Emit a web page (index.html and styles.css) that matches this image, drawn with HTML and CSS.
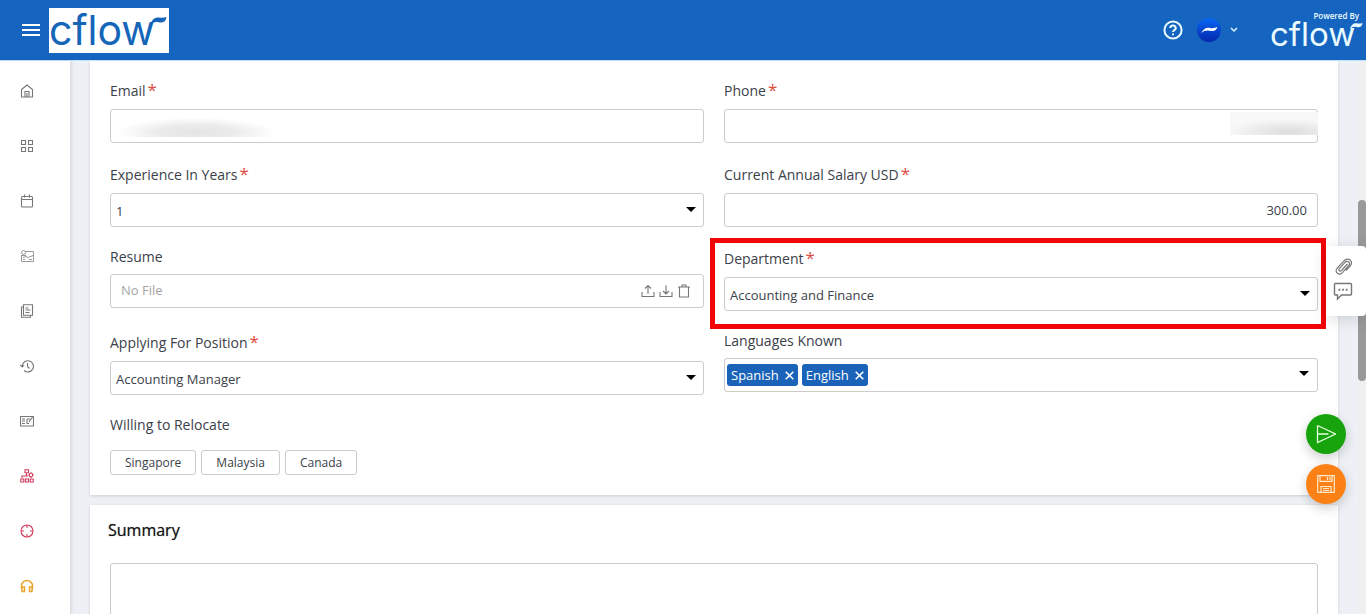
FILE: index.html
```html
<!DOCTYPE html>
<html lang="en">
<head>
<meta charset="utf-8">
<meta name="viewport" content="width=device-width, initial-scale=1">
<title>Cflow</title>
<link rel="stylesheet" href="styles.css">
</head>
<body>
<header class="topbar">
  <button class="menu-btn" type="button" aria-label="Menu"><svg width="18" height="14" viewBox="0 0 18 14" stroke="#fff" stroke-width="2"><path d="M0 2h18M0 7h18M0 12h18"/></svg></button>
  <a class="brand" href="#"><span class="word">cflow</span><svg class="swoosh" width="18" height="10" viewBox="0 0 18 10" fill="#1565b8"><path d="M1 9.500C3 3 6 1 10 1.500c3 .6 5 .3 7.500-.5-.5 4-3 6-7 5.500C6.500 5.500 4 6 1 9.500z"/></svg></a>
  <div class="top-right">
    <button class="plain" type="button" aria-label="Help"><svg width="20" height="20" viewBox="0 0 20 20" fill="none" stroke="#e9fbff" stroke-width="2"><circle cx="10" cy="10" r="8.6"/><path d="M7.3 8a2.7 2.5 0 1 1 4 2.1c-.9.5-1.3.9-1.3 1.9M10 13.6v1.6"/></svg></button>
    <button class="plain account" type="button" aria-label="Account"><svg width="24" height="24" viewBox="0 0 24 24"><defs><linearGradient id="av" x1="0" y1="0" x2="0" y2="1"><stop offset="0" stop-color="#0768f5"/><stop offset="1" stop-color="#0526ad"/></linearGradient></defs><circle cx="12" cy="12" r="12" fill="url(#av)"/><path d="M4 15c3-5 6-6 9-5 3 .5 5 0 7.500-1-1 3-3 4.500-6 4-4-1-7-1-10.500 2z" fill="#fff"/></svg><svg width="8" height="6" viewBox="0 0 8 6" fill="none" stroke="#dff4ff" stroke-width="1.500"><path d="M1 1l3 3 3-3"/></svg></button>
    <a class="powered" href="#"><span class="by">Powered By</span><span class="word">cflow</span><svg class="swoosh" width="14" height="8" viewBox="0 0 18 10" fill="#e9fbff"><path d="M1 9.500C3 3 6 1 10 1.500c3 .6 5 .3 7.500-.5-.5 4-3 6-7 5.500C6.500 5.500 4 6 1 9.500z"/></svg></a>
  </div>
</header>
<div class="shell">
  <nav class="sidebar" aria-label="Main">
    <a href="#" aria-label="Home"><svg class="ic" viewBox="0 0 14 14"><path d="M1.500 5.500L7 1l5.500 4.500V13h-11zM5 13V7.500h4V13M7 9v4"/></svg></a>
    <a href="#" aria-label="Dashboard"><svg class="ic" viewBox="0 0 14 14"><path d="M1.500 1.500h4v4h-4zM8.500 1.500h4v4h-4zM1.500 8.500h4v4h-4zM8.500 8.500h4v4h-4z"/></svg></a>
    <a href="#" aria-label="Calendar"><svg class="ic" viewBox="0 0 14 14"><rect x="1.500" y="2.500" width="11" height="10.500" rx="1"/><path d="M1.500 5.500h11M4.500 .5v3M9.500 .5v3"/></svg></a>
    <a href="#" aria-label="Analytics"><svg class="ic faint" viewBox="0 0 14 14"><path d="M5 2.500h8.500v10H1.500V6M3 8.500l3-1 2 1 5-2M9 10.500h3M3 10.500h2"/><circle cx="3.500" cy="3.500" r="2"/><path d="M1 6.500h5"/></svg></a>
    <a href="#" aria-label="Reports"><svg class="ic" viewBox="0 0 14 14"><path d="M3.500 .8h9v10.400h-9zM3.500 3h-2v10.200h9v-2M5.500 4h3M5.500 6h5M5.500 8.500h4"/></svg></a>
    <a href="#" aria-label="History"><svg class="ic" viewBox="0 0 14 14"><path d="M2.200 7A5.600 5.600 0 1 1 4 11.500M.3 6l2 2 1.800-2M7.500 4v3.500L9.500 9.500"/></svg></a>
    <a href="#" aria-label="Forms"><svg class="ic" viewBox="0 0 14 14"><path d="M.5 2.500h13v9.500H.5zM2 5h3M2 7h3M2 9.500h3M7 5h3M7 5v4.500h2M9 8l3.500-5"/></svg></a>
    <a href="#" aria-label="Workflow"><svg class="ic red" viewBox="0 0 14 14"><path d="M5 .8h3.500v3H5zM6.500 4v3H2v2M7 7h1M.8 10h3v3h-3zM5.500 10h3v3h-3zM10.200 10h3v3h-3z"/><circle cx="11" cy="6" r="1.800"/><path d="M11 3.200v1M11 8v1M8.300 6h1M12.700 6h1"/></svg></a>
    <a href="#" aria-label="Target"><svg class="ic red" viewBox="0 0 14 14"><circle cx="7" cy="7" r="6"/><path d="M7 1v3M7 10v3M1 7h3M10 7h3"/></svg></a>
    <a href="#" aria-label="Support"><svg class="ic amber" viewBox="0 0 14 14"><path d="M1.500 10V7a5.500 5.500 0 0 1 11 0v3"/><path d="M2 8h2.500v4.500H2zM9.500 8H12v4.500H9.500z"/></svg></a>
  </nav>
  <main class="content">
    <form class="card form-card">
      <div class="field required">
        <label for="email">Email<span class="star">*</span></label>
        <div class="control"><input id="email" type="text"><span class="smudge smudge-left"></span></div>
      </div>
      <div class="field required">
        <label for="phone">Phone<span class="star">*</span></label>
        <div class="control"><input id="phone" type="text"><span class="smudge smudge-right"></span></div>
      </div>
      <div class="field required">
        <label for="exp">Experience In Years<span class="star">*</span></label>
        <div class="control drop"><select id="exp"><option>1</option></select></div>
      </div>
      <div class="field required">
        <label for="salary">Current Annual Salary USD<span class="star">*</span></label>
        <div class="control"><input id="salary" class="num" type="text" value="300.00"></div>
      </div>
      <div class="field">
        <label for="resume">Resume</label>
        <div class="control file-control">
          <input id="resume" type="text" placeholder="No File" readonly>
          <button class="plain" type="button" aria-label="Upload"><svg class="fi" viewBox="0 0 14 14"><path d="M1 8v4.500h12V8M7 10V1.500M4 4.500l3-3 3 3"/></svg></button>
          <button class="plain" type="button" aria-label="Download"><svg class="fi" viewBox="0 0 14 14"><path d="M1 8v4.500h12V8M7 1.500V10M4 7l3 3 3-3"/></svg></button>
          <button class="plain" type="button" aria-label="Delete"><svg class="fi" viewBox="0 0 14 14"><path d="M1 3h12M2.500 3v10h9V3M5 3V1h4v2"/></svg></button>
        </div>
      </div>
      <div class="field required highlighted">
        <label for="dept">Department<span class="star">*</span></label>
        <div class="control drop"><select id="dept"><option>Accounting and Finance</option></select></div>
      </div>
      <div class="field required">
        <label for="pos">Applying For Position<span class="star">*</span></label>
        <div class="control drop"><select id="pos"><option>Accounting Manager</option></select></div>
      </div>
      <div class="field" role="group" aria-labelledby="langs">
        <span class="label" id="langs">Languages Known</span>
        <div class="control drop tags">
          <button class="tag" type="button">Spanish<svg width="9" height="9" viewBox="0 0 9 9" stroke="#fff" stroke-width="1.600"><path d="M.7.7l7.600 7.600M8.300.7L.7 8.300"/></svg></button>
          <button class="tag" type="button">English<svg width="9" height="9" viewBox="0 0 9 9" stroke="#fff" stroke-width="1.600"><path d="M.7.7l7.600 7.600M8.300.7L.7 8.300"/></svg></button>
        </div>
      </div>
      <div class="field" role="group" aria-labelledby="reloc">
        <span class="label" id="reloc">Willing to Relocate</span>
        <div class="choices"><button type="button">Singapore</button><button type="button">Malaysia</button><button type="button">Canada</button></div>
      </div>
    </form>
    <section class="card summary">
      <h2 id="sum">Summary</h2>
      <textarea aria-labelledby="sum"></textarea>
    </section>
  </main>
  <div class="scroll"><div class="thumb"></div></div>
</div>
<aside class="dock">
  <button class="plain" type="button" aria-label="Attachments"><svg width="20" height="20" viewBox="0 0 20 20" fill="none" stroke="#777" stroke-width="1.200"><path d="M14.500 7l-6 6.500c-1.500 1.500-3.500-.3-2.200-1.900L12 5.300c2.600-2.500 6 .6 3.700 3.300l-6.500 7.200c-3.200 3.300-8.300-.8-5-4.600l6.500-7.100c2.700-2.800 5.300-2.300 6.800-.7 1.400 1.700 1.300 3.800-.5 5.800L13 13.500"/></svg></button>
  <button class="plain" type="button" aria-label="Comments"><svg width="20" height="20" viewBox="0 0 20 20" fill="none" stroke="#777" stroke-width="1.400"><path d="M2.500 2.500h15q1 0 1 1v9.500q0 1-1 1H8.500L4.500 18v-4h-2q-1 0-1-1V3.500q0-1 1-1z"/><path d="M5.500 8.800h1.800M9.100 8.800h1.800M12.700 8.800h1.800" stroke-width="2"/></svg></button>
</aside>
<div class="fabs">
  <button class="fab send" type="button" aria-label="Submit"><svg width="20" height="20" viewBox="0 0 20 20" fill="none" stroke="#e6ffe0" stroke-width="1.300"><path d="M1.500 1.500L19.500 10 1.500 18.500V1.500M1.500 10H12.500"/></svg></button>
  <button class="fab save" type="button" aria-label="Save"><svg width="18" height="18" viewBox="0 0 18 18" fill="none" stroke="#ffe9c9" stroke-width="1.200"><path d="M.7.700h16.600v16.600H.7zM3 .7v5.600h12V.7M10.500 2v3M13 2v3M4 17v-5.500h10V17M6 13.500h6M6 15.500h6"/></svg></button>
</div>
</body>
</html>
```
FILE: styles.css
```css
* { box-sizing: border-box; }
body {
  margin: 0;
  height: 100vh;
  display: flex;
  flex-direction: column;
  overflow: hidden;
  background: #edf1f5;
  color: #3b414a;
  font-family: "Open Sans", "Noto Sans", sans-serif;
  font-size: 14px;
}
button, input, select, textarea { font: inherit; color: inherit; }
button { cursor: pointer; }
svg { display: block; flex: none; }
a { text-decoration: none; color: inherit; }
.plain { border: 0; background: none; padding: 0; }

.topbar {
  flex: none;
  display: flex;
  align-items: center;
  height: 61px;
  padding: 0 5px 0 22px;
  background: #1565c0;
  border-bottom: 1px solid #c3e3fb;
}
.menu-btn { border: 0; background: none; padding: 0; }
.word { font-family: Inter, sans-serif; white-space: nowrap; }
.brand {
  position: relative;
  display: flex;
  align-items: center;
  width: 120px;
  height: 45px;
  margin-left: 9px;
  background: #fff;
  color: #1565b8;
}
.brand .word { font-size: 41px; line-height: 44px; }
.brand .swoosh { position: absolute; top: 8px; right: 2px; }
.top-right { display: flex; align-items: center; margin-left: auto; color: #e9fbff; }
.account { display: flex; align-items: center; gap: 9px; margin: 0 32px 0 14px; }
.powered { position: relative; display: flex; flex-direction: column; width: 91px; height: 40px; }
.powered .by { align-self: flex-end; font-size: 8px; line-height: 12px; margin-right: 2px; font-weight: 600; }
.powered .word { font-size: 33px; line-height: 24px; }
.powered .swoosh { position: absolute; top: 12px; right: -2px; }

.shell { flex: 1; display: flex; min-height: 0; }
.sidebar {
  flex: none;
  width: 71px;
  display: flex;
  flex-direction: column;
  gap: 41px;
  padding: 23px 0 0 20px;
  background: #fff;
  border-right: 1px solid #d9dde0;
  box-shadow: 1px 0 3px rgba(0, 0, 0, .08);
}
.sidebar a { width: 14px; height: 14px; }
.ic, .fi { width: 14px; height: 14px; fill: none; stroke: #777; stroke-width: 1.1; }
.faint { stroke: #999; stroke-width: 1; }
.red { stroke: #d43a5c; }
.amber { stroke: #e8a62e; stroke-width: 1.5; }

.content { flex: 1; min-width: 0; overflow: hidden; padding: 0 20px 0 19px; }
.card { background: #fff; box-shadow: 0 1px 3px rgba(0, 0, 0, .14); }
.form-card {
  display: grid;
  grid-template-columns: 1fr 1fr;
  gap: 20px;
  align-items: start;
  padding: 18px 20px 20px;
}
.field { position: relative; }
label, .label { display: block; line-height: 20px; margin-bottom: 7px; }
.required label { padding-top: 2px; margin-bottom: 8px; }
.star {
  margin-left: 2px;
  color: #dc4a41;
  font-size: 17px;
  line-height: 1px;
}
.control { position: relative; display: flex; height: 34px; }
.control input, .control select, .tags, .summary textarea {
  width: 100%;
  border: 1px solid #ccc;
  border-radius: 3px;
  background: #fff;
}
.control input, .control select { height: 34px; padding: 0 10px; font-size: 13px; }
.control select { appearance: none; padding: 2px 5px 0; }
.num { text-align: right; }
.drop::after {
  content: "";
  position: absolute;
  top: 14px;
  right: 8px;
  border: 5px solid transparent;
  border-top-color: #000;
  border-bottom: 0;
}
.tags { align-items: center; gap: 4px; padding: 0 2px; }
.tags::after { top: 12px; }
.tag {
  display: flex;
  align-items: center;
  gap: 6px;
  height: 22px;
  padding: 0 4px;
  border: 0;
  border-radius: 3px;
  background: #1a63b8;
  color: #fff;
  font-size: 13px;
  font-weight: 500;
}
.file-control {
  align-items: center;
  gap: 4px;
  padding-right: 12px;
  border: 1px solid #ccc;
  border-radius: 3px;
}
.file-control input { border: 0; background: none; height: 32px; padding-bottom: 2px; }
.file-control input::placeholder { color: #a5a5a5; opacity: 1; }
.smudge { position: absolute; pointer-events: none; }
.smudge-left {
  left: 6px; top: 6px; width: 160px; height: 22px;
  background: radial-gradient(ellipse 78px 15px at 50% 80%, #e4e4e4, #ebebeb 50%, rgba(255, 255, 255, 0));
}
.smudge-right {
  right: 0; top: 3px; width: 88px; height: 23px;
  background: radial-gradient(ellipse 60px 13px at 66% 86%, #dcdcdc, #f8f8f8);
}
.highlighted::after {
  content: "";
  position: absolute;
  inset: -9px -8px -18px -14px;
  border: 5px solid #f20505;
  pointer-events: none;
}
.choices { display: flex; gap: 5px; padding-top: 8px; }
.choices button {
  height: 25px;
  padding: 0 14px;
  border: 1px solid #ccc;
  border-radius: 3px;
  background: #fff;
  font-size: 12px;
}
.summary { margin-top: 10px; padding: 13px 20px; }
.summary h2 {
  margin: 0 0 21px -2px;
  color: #111;
  font-size: 16px;
  line-height: 24px;
  font-weight: 500;
  text-shadow: 0 0 1px rgba(0, 0, 0, .5);
}
.summary textarea { display: block; height: 120px; resize: none; }

.scroll { flex: none; width: 8px; padding-top: 139px; background: #efefef; }
.thumb { height: 181px; border-radius: 4px; background: #999; }

.dock {
  position: fixed;
  top: 246px;
  right: 0;
  display: flex;
  flex-direction: column;
  gap: 4px;
  width: 40px;
  padding: 11px 7px 15px;
  border-radius: 0 4px 4px 0;
  background: #fff;
  box-shadow: 0 3px 16px rgba(0, 0, 0, .14);
}
.fabs { position: fixed; top: 414px; right: 20px; display: flex; flex-direction: column; gap: 10px; }
.fab {
  display: grid;
  place-items: center;
  width: 40px;
  height: 40px;
  padding: 0;
  border: 0;
  border-radius: 50%;
  box-shadow: 0 4px 12px rgba(0, 0, 0, .2);
}
.send { background: #17a30b; }
.save { background: #fb8117; }
```
